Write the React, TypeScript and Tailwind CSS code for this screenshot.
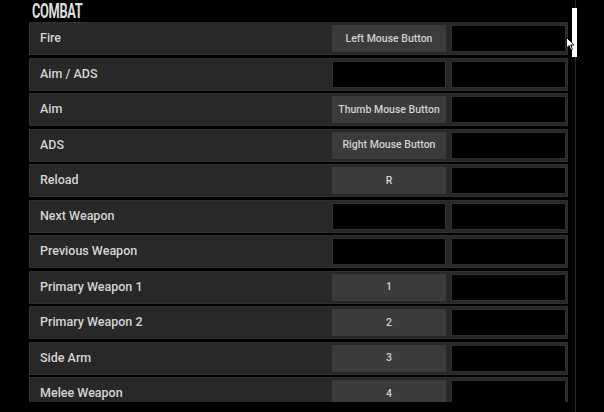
import React from 'react';

const bindings: { name: string; key: string | null }[] = [
	{ name: 'Fire', key: 'Left Mouse Button' },
	{ name: 'Aim / ADS', key: null },
	{ name: 'Aim', key: 'Thumb Mouse Button' },
	{ name: 'ADS', key: 'Right Mouse Button' },
	{ name: 'Reload', key: 'R' },
	{ name: 'Next Weapon', key: null },
	{ name: 'Previous Weapon', key: null },
	{ name: 'Primary Weapon 1', key: '1' },
	{ name: 'Primary Weapon 2', key: '2' },
	{ name: 'Side Arm', key: '3' },
	{ name: 'Melee Weapon', key: '4' },
];

const App: React.FC = () => {
	return (
		<div className="relative w-[604px] h-[412px] overflow-hidden bg-black" style={{ fontFamily: 'Roboto, "Noto Sans", sans-serif' }}>
			<div className="h-[22px] pl-[32px] pt-[1px]">
				<span className="inline-block origin-left scale-x-[0.64] text-[20px] font-bold leading-[20px] tracking-tight text-[#dedede]">COMBAT</span>
			</div>

			<div className="ml-[29px] flex h-[380px] w-[539px] flex-col gap-[2.5px] overflow-hidden">
				{bindings.map((b, i) => (
					<div key={i} className="flex h-[33px] shrink-0 items-center border border-[#303030] bg-[#282828] pr-[1px]">
						<span className="pl-[10px] text-[12.5px] font-medium text-[#d4d4d4]">{b.name}</span>
						<div className="ml-auto flex gap-[5px]">
							{b.key ? (
								<div className="flex h-[27px] w-[114px] items-center justify-center bg-[#3b3b3b] text-[10.5px] font-medium text-[#d0d0d0]">
									{b.key}
								</div>
							) : (
								<div className="h-[27px] w-[114px] border border-[#2f2f2f] bg-black" />
							)}
							<div className="h-[27px] w-[115px] border border-[#2f2f2f] bg-black" />
						</div>
					</div>
				))}
			</div>

			{/* scrollbar */}
			<div className="absolute left-[575px] top-0 h-full w-px bg-[#2a2a2a]" />
			<div className="absolute left-[572px] top-[8px] h-[49px] w-[5px] bg-white" />

			{/* cursor */}
			<svg className="absolute left-[566px] top-[37px]" width="9" height="14" viewBox="0 0 9 14">
				<path d="M0.5 0.5 L0.5 11 L3 8.5 L5 13 L6.5 12.3 L4.6 8 L8 8 Z" fill="#fff" stroke="#000" strokeWidth="0.8" />
			</svg>
		</div>
	);
};

export default App;
